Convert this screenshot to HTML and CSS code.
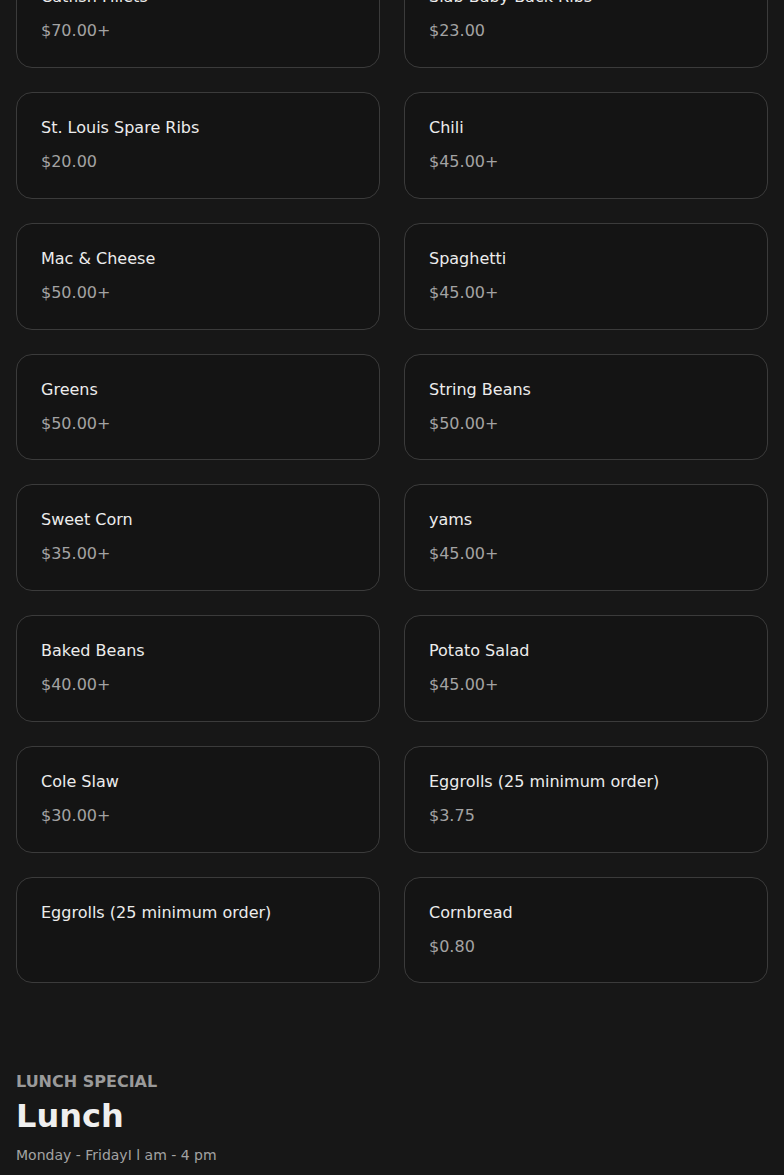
FILE: index.html
```html
<!DOCTYPE html>
<html lang="en">
<head>
<meta charset="utf-8">
<title>Menu</title>
<link rel="stylesheet" href="styles.css">
</head>
<body>
<main class="page">
  <section class="menu-section">
    <div class="grid">
      <div class="card"><div class="name">Catfish Fillets</div><div class="price">$70.00+</div></div>
      <div class="card"><div class="name">Slab Baby Back Ribs</div><div class="price">$23.00</div></div>
      <div class="card"><div class="name">St. Louis Spare Ribs</div><div class="price">$20.00</div></div>
      <div class="card"><div class="name">Chili</div><div class="price">$45.00+</div></div>
      <div class="card"><div class="name">Mac &amp; Cheese</div><div class="price">$50.00+</div></div>
      <div class="card"><div class="name">Spaghetti</div><div class="price">$45.00+</div></div>
      <div class="card"><div class="name">Greens</div><div class="price">$50.00+</div></div>
      <div class="card"><div class="name">String Beans</div><div class="price">$50.00+</div></div>
      <div class="card"><div class="name">Sweet Corn</div><div class="price">$35.00+</div></div>
      <div class="card"><div class="name">yams</div><div class="price">$45.00+</div></div>
      <div class="card"><div class="name">Baked Beans</div><div class="price">$40.00+</div></div>
      <div class="card"><div class="name">Potato Salad</div><div class="price">$45.00+</div></div>
      <div class="card"><div class="name">Cole Slaw</div><div class="price">$30.00+</div></div>
      <div class="card"><div class="name">Eggrolls (25 minimum order)</div><div class="price">$3.75</div></div>
      <div class="card"><div class="name">Eggrolls (25 minimum order)</div></div>
      <div class="card"><div class="name">Cornbread</div><div class="price">$0.80</div></div>
    </div>
  </section>
  <section class="lunch">
    <div class="eyebrow">LUNCH SPECIAL</div>
    <h2 class="title">Lunch</h2>
    <p class="hours">Monday - FridayI l am - 4 pm</p>
  </section>
</main>
</body>
</html>
```
FILE: styles.css
```css
html, body {
  margin: 0;
  padding: 0;
  background: #171717;
  font-family: "DejaVu Sans", sans-serif;
  color: #ececec;
}
.page {
  padding: 0 16px;
  margin-top: -38.75px;
}
.menu-section {
  padding-bottom: 40px;
}
.grid {
  display: grid;
  grid-template-columns: 1fr 1fr;
  gap: 24px;
}
.card {
  background: #141414;
  border: 1px solid #3b3b3b;
  border-radius: 16px;
  padding: 23px 24px 22px;
  min-height: 106.75px;
  box-sizing: border-box;
}
.name {
  font-size: 16px;
  line-height: 24px;
  color: #ececec;
}
.price {
  font-size: 16px;
  line-height: 24px;
  margin-top: 10px;
  color: #a3a3a3;
}
.lunch {
  padding-top: 47px;
}
.eyebrow {
  font-size: 16px;
  line-height: 24px;
  font-weight: bold;
  color: #9a9a9a;
  margin-bottom: 2px;
}
.title {
  margin: 0;
  font-size: 32px;
  line-height: 40px;
  font-weight: bold;
  color: #efefef;
}
.hours {
  margin: 9px 0 0;
  font-size: 14px;
  line-height: 20px;
  color: #a3a3a3;
}
```
